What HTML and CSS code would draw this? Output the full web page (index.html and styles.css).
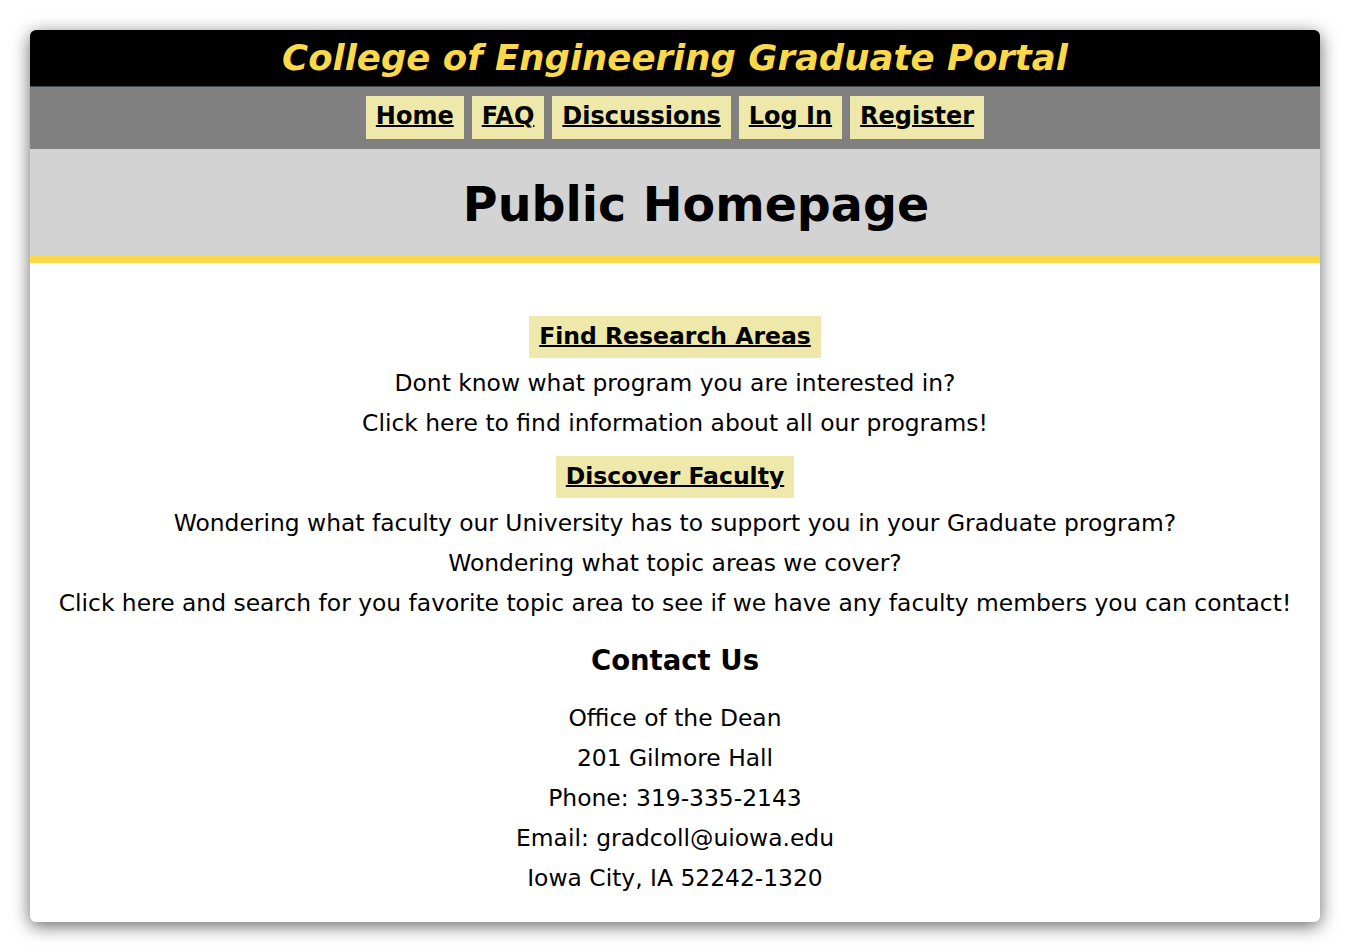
FILE: index.html
```html
<!DOCTYPE html>
<html lang="en">
<head>
<meta charset="utf-8">
<title>College of Engineering Graduate Portal</title>
<link rel="stylesheet" href="styles.css">
</head>
<body>
<div class="card">
  <header class="masthead">
    <h1 class="site-title">College of Engineering Graduate Portal</h1>
  </header>
  <nav class="nav">
    <a class="nav-link" href="#">Home</a>
    <a class="nav-link" href="#">FAQ</a>
    <a class="nav-link" href="#">Discussions</a>
    <a class="nav-link" href="#">Log In</a>
    <a class="nav-link" href="#">Register</a>
  </nav>
  <section class="page-head">
    <h2 class="page-title">Public Homepage</h2>
  </section>
  <main class="content">
    <a class="cta cta-first" href="#">Find Research Areas</a>
    <div class="lines">
      <p>Dont know what program you are interested in?</p>
      <p>Click here to find information about all our programs!</p>
    </div>
    <a class="cta cta-second" href="#">Discover Faculty</a>
    <div class="lines">
      <p>Wondering what faculty our University has to support you in your Graduate program?</p>
      <p>Wondering what topic areas we cover?</p>
      <p>Click here and search for you favorite topic area to see if we have any faculty members you can contact!</p>
    </div>
    <h3 class="contact-title">Contact Us</h3>
    <div class="lines address">
      <p>Office of the Dean</p>
      <p>201 Gilmore Hall</p>
      <p>Phone: 319-335-2143</p>
      <p>Email: gradcoll@uiowa.edu</p>
      <p>Iowa City, IA 52242-1320</p>
    </div>
  </main>
</div>
</body>
</html>
```
FILE: styles.css
```css
html, body {
  margin: 0;
  padding: 0;
  background: #ffffff;
}
body {
  padding: 30px;
  font-family: "DejaVu Sans", "Verdana", sans-serif;
  color: #000;
}
.card {
  border-radius: 6px;
  overflow: hidden;
  background: #ffffff;
  box-shadow: 0 4px 18px rgba(0, 0, 0, 0.6);
}
.masthead {
  background: #000;
  height: 56px;
  border-bottom: 1px solid #3c5050;
  display: flex;
  align-items: center;
  justify-content: center;
}
.site-title {
  margin: 0;
  font-size: 35.5px;
  font-weight: bold;
  font-style: italic;
  color: #fbd94a;
  line-height: 56px;
}
.nav {
  background: #808080;
  height: 62px;
  display: flex;
  justify-content: center;
  align-items: flex-start;
  gap: 8px;
  padding-top: 9px;
  box-sizing: border-box;
}
.nav-link {
  background: #eee8aa;
  color: #000;
  font-weight: bold;
  font-size: 24px;
  height: 43px;
  line-height: 40px;
  padding: 0 10px;
  text-decoration: underline;
  text-decoration-thickness: 2px;
}
.page-head {
  background: #d3d3d3;
  height: 106px;
  border-bottom: 8px solid #f8da4b;
  display: flex;
  align-items: center;
  justify-content: center;
}
.page-title {
  margin: 6px 0 0;
  padding-left: 42px;
  font-size: 47.5px;
  font-weight: bold;
  line-height: 56px;
}
.content {
  display: flex;
  flex-direction: column;
  align-items: center;
  text-align: center;
  padding: 53px 0 24px;
}
.cta {
  background: #eee8aa;
  color: #000;
  font-weight: bold;
  font-size: 23.5px;
  height: 42px;
  line-height: 40px;
  padding: 0 10px;
  text-decoration: underline;
  text-decoration-thickness: 2px;
}
.cta-second {
  margin-top: 13px;
}
.lines {
  margin-top: 5px;
  font-size: 23.4px;
  line-height: 40px;
}
.lines p {
  margin: 0;
}
.contact-title {
  margin: 17px 0 0;
  font-size: 27.5px;
  font-weight: bold;
  line-height: 40px;
}
.address {
  margin-top: 18px;
}
```
